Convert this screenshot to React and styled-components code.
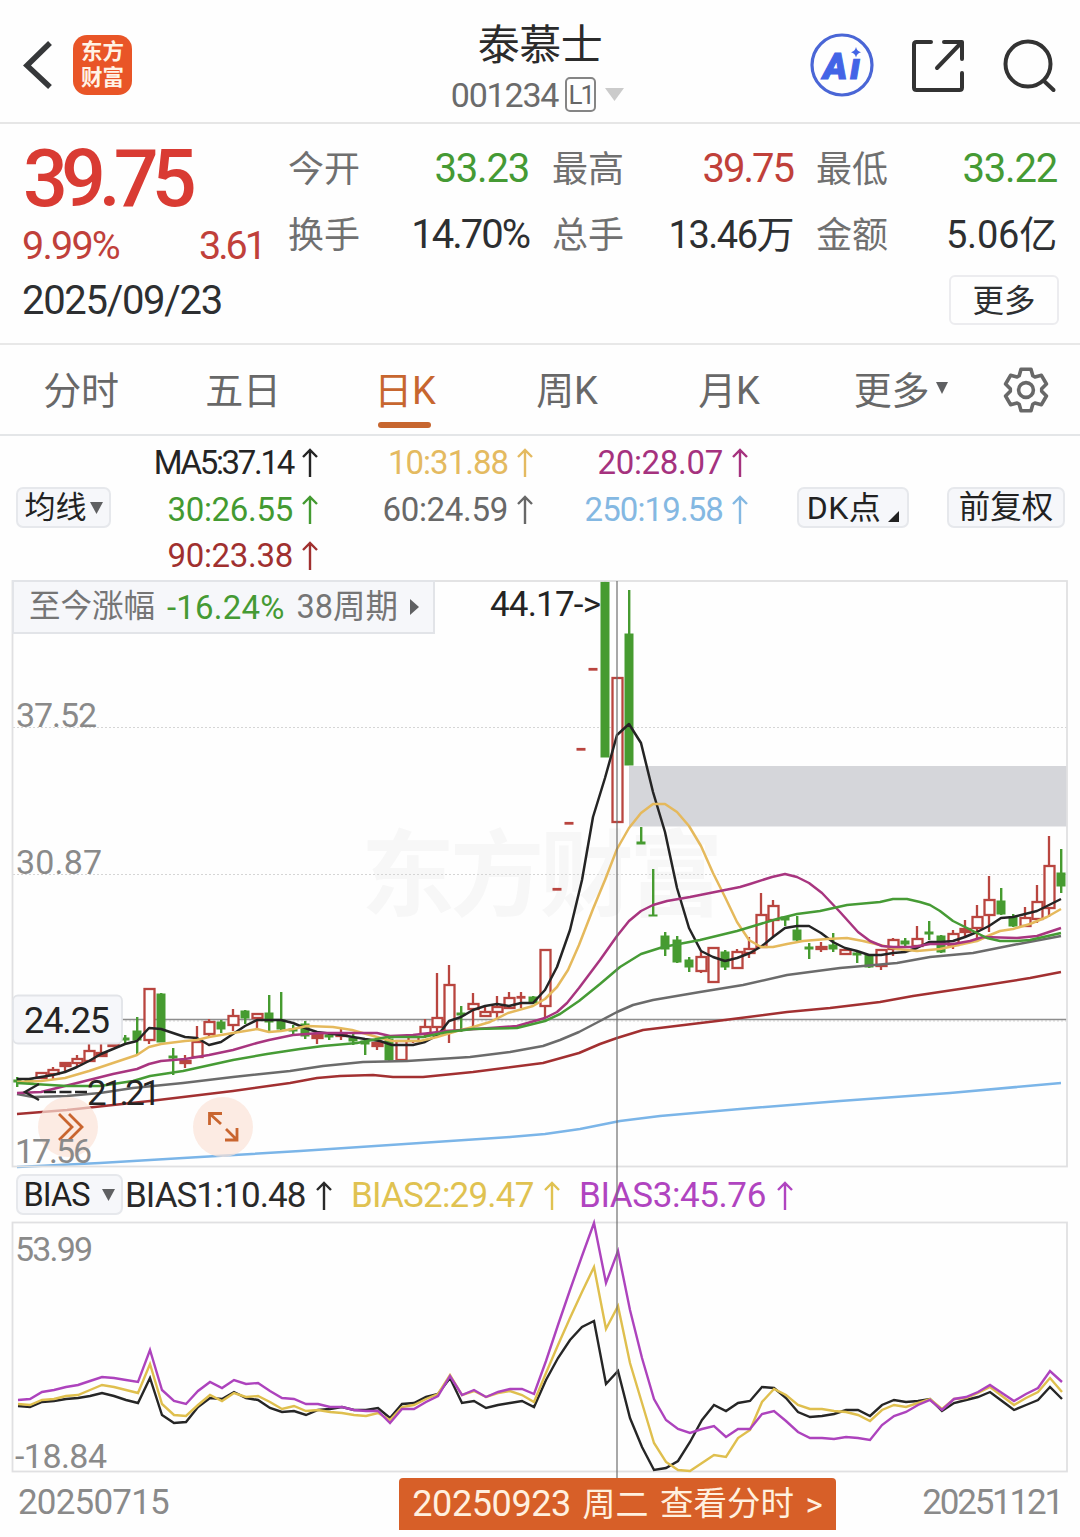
// App.jsx

import React from 'react';
import styled, { createGlobalStyle } from 'styled-components';

const GlobalStyle = createGlobalStyle`
  * {
    box-sizing: border-box;
  }

  body {
    margin: 0;
    background: #fefefe;
    font-family: Roboto, 'Noto Sans CJK SC', sans-serif;
    color: #2b2b2b;
  }

  svg {
    display: block;
    flex: none;
    overflow: visible;
  }
`;

const Page = styled.div`
  width: 1080px;
  height: 1537px;
  overflow: hidden;
  background: #fefefe;
`;

const Txt = styled.span`
  font-size: ${(p) => p.$size || 36}px;
  letter-spacing: ${(p) => p.$track || 0}px;
  color: ${(p) => p.$color || 'inherit'};
  line-height: 1;
  white-space: nowrap;
`;

const Header = styled.header`
  height: 124px;
  border-bottom: 2px solid #e6e6e6;
  display: grid;
  grid-template-columns: 400px 280px 400px;
  align-items: center;
  padding-top: 8px;
`;

const HeaderLeft = styled.div`
  display: flex;
  align-items: center;
  gap: 19px;
  padding-left: 22px;
`;

const Logo = styled.div`
  width: 59px;
  height: 60px;
  border-radius: 14px;
  background: #e95527;
  color: #fff3e6;
  font-size: 21.5px;
  font-weight: 700;
  line-height: 26px;
  padding-top: 4px;
  text-align: center;
`;

const HeaderTitle = styled.div`
  display: flex;
  flex-direction: column;
  align-items: center;
  gap: 10px;
  padding-top: 7px;
`;

const CodeRow = styled.div`
  display: flex;
  align-items: center;
  gap: 7px;
  height: 35px;
  margin-left: -5px;
`;

const Level = styled.span`
  width: 31px;
  height: 35px;
  margin-right: 2px;
  border: 2px solid #858585;
  border-radius: 5px;
  color: #666;
  font-size: 26px;
  line-height: 32px;
  letter-spacing: -2px;
  text-align: center;
`;

const HeaderRight = styled.div`
  display: flex;
  align-items: center;
  gap: 37px;
  padding-left: 130px;
`;

const Quote = styled.section`
  height: 221px;
  border-bottom: 2px solid #e8e8e8;
  display: grid;
  grid-template-columns: 240px 768px;
  column-gap: 25px;
  padding-left: 24px;
`;

const PriceBlock = styled.div`
  display: flex;
  flex-direction: column;
`;

const Price = styled.div`
  height: 60px;
  margin-top: 24px;
  margin-left: -1px;
  font-size: 79px;
  font-weight: 500;
  letter-spacing: -7px;
  line-height: 62px;
  color: #d93b33;
`;

const ChangeRow = styled.div`
  display: flex;
  justify-content: space-between;
  margin-top: 18px;
  margin-left: -2px;
  line-height: 42px;
  color: #c0403a;
`;

const DateRow = styled.div`
  margin-top: 15px;
  margin-left: -2px;
  line-height: 42px;
  color: #2d2f31;
`;

const Stats = styled.div`
  display: grid;
  grid-template-columns: repeat(3, 240px);
  grid-template-rows: 66px 66px 50px;
  column-gap: 24px;
  padding-top: 12px;
`;

const Stat = styled.div`
  display: flex;
  align-items: center;
  justify-content: space-between;
`;

const StatLabel = styled(Txt)`
  margin-left: -1px;
  padding-top: 2px;
  color: #707070;
`;

const MoreButton = styled.button`
  grid-column: 3;
  justify-self: end;
  width: 110px;
  height: 50px;
  margin-top: 7px;
  margin-right: -2px;
  border: 2px solid #ececef;
  border-radius: 6px;
  background: #fefefe;
  color: #2d2f31;
  font: 31.5px/40px 'Noto Sans CJK SC', sans-serif;
  padding: 0 0 5px;
`;

const Tabs = styled.nav`
  height: 91px;
  border-bottom: 2px solid #e4e6e8;
  display: grid;
  grid-template-columns: repeat(5, 162px) 182px 68px;
`;

const Tab = styled.div`
  display: flex;
  align-items: center;
  justify-content: center;
  gap: 7px;
  position: relative;
  padding-bottom: ${(p) => (p.$icon ? 0 : 4)}px;
  font-size: 38px;
  letter-spacing: -0.2px;
  color: ${(p) => (p.$active ? '#c7662f' : '#686868')};

  &::after {
    content: '';
    display: ${(p) => (p.$active ? 'block' : 'none')};
    position: absolute;
    left: 54px;
    bottom: 6px;
    width: 53px;
    height: 6px;
    border-radius: 3px;
    background: #c7662f;
  }
`;

const Legend = styled.section`
  height: 144px;
  display: flex;
  padding: 3px 16px 0;
`;

const Chip = styled.div`
  width: ${(p) => p.$w}px;
  height: 41px;
  flex: none;
  display: flex;
  align-items: center;
  justify-content: center;
  gap: ${(p) => p.$gap || 0}px;
  border: 2px solid #e6e8ec;
  border-radius: 7px;
  background: #f6f7fa;
  color: #222;
  font-size: ${(p) => p.$size || 31}px;
  line-height: 36px;
  letter-spacing: ${(p) => p.$track || 0}px;
`;

const LegendGrid = styled.div`
  display: grid;
  grid-template-columns: 207px 215px 215px;
  grid-template-rows: 47px 47px 45px;
  margin-right: 49px;
`;

const LegendItem = styled.div`
  display: flex;
  align-items: center;
  justify-content: flex-end;
  gap: 9px;
  color: ${(p) => p.$color};
`;

const ChipRow = styled.div`
  display: flex;
  gap: ${(p) => p.$gap || 0}px;
  padding-top: 48px;
`;

const Charts = styled.main`
  position: relative;
`;

const Crosshair = styled.div`
  position: absolute;
  left: 616px;
  top: 1px;
  width: 2px;
  height: 897px;
  background: rgba(110, 110, 110, 0.6);
`;

const GainTab = styled.div`
  position: absolute;
  left: 12px;
  top: 0;
  width: 423px;
  height: 54px;
  border: 2px solid #e2e4e8;
  background: #f6f7fa;
  display: flex;
  align-items: center;
  padding-left: 15px;
  gap: 12px;
  color: #757575;
`;

const BiasRow = styled.div`
  height: 53px;
  display: flex;
  align-items: center;
  padding-left: 16px;
`;

const BiasItem = styled(LegendItem)`
  justify-content: space-between;
  width: ${(p) => p.$w}px;
  margin-left: ${(p) => p.$ml}px;
  padding-top: 2px;
`;

const Footer = styled.footer`
  display: grid;
  grid-template-columns: 381px 437px 1fr;
  align-items: start;
  padding: 5px 18px 0;
`;

const FootDate = styled(Txt)`
  line-height: 50px;
  justify-self: ${(p) => (p.$end ? 'end' : 'start')};
`;

const DayButton = styled.div`
  height: 52px;
  border-radius: 4px 4px 0 0;
  background: #d75f28;
  color: #fff0df;
  display: flex;
  align-items: center;
  justify-content: center;
  gap: 11.5px;
`;

const MA_LEGEND = [
  { label: 'MA5:37.14', color: '#242424', track: -2.3 },
  { label: '10:31.88', color: '#e4ba60', track: -1 },
  { label: '20:28.07', color: '#a5327e', track: -0.3 },
  { label: '30:26.55', color: '#439a31', track: -0.3 },
  { label: '60:24.59', color: '#686868', track: -0.3 },
  { label: '250:19.58', color: '#84b8e2', track: -0.9 },
  { label: '90:23.38', color: '#a0302f', track: -0.3 },
];

const BIAS_LEGEND = [
  { label: 'BIAS1:10.48', color: '#2a2a2a', w: 207, ml: 2, track: -1 },
  { label: 'BIAS2:29.47', color: '#e0c251', w: 209, ml: 19, track: -0.8 },
  { label: 'BIAS3:45.76', color: '#b044c0', w: 214, ml: 19, track: -0.4 },
];

const STATS = [
  { label: '今开', value: '33.23', color: '#459a34', track: -1.2 },
  { label: '最高', value: '39.75', color: '#c0403a', track: -2 },
  { label: '最低', value: '33.22', color: '#459a34', track: -1.2 },
  { label: '换手', value: '14.70%', color: '#2d2f31', track: -2 },
  { label: '总手', value: '13.46万', color: '#2d2f31', track: -1.5 },
  { label: '金额', value: '5.06亿', color: '#2d2f31', track: -0.2 },
];

// [up, high, bodyTop, bodyBottom, low], 1 = red, 0 = green
const CANDLES = [
  [0, 1077, 1080, 1082, 1087], [0, 1078, 1080, 1082, 1083], [1, 1072, 1073, 1078, 1078],
  [1, 1067, 1070, 1074, 1079], [1, 1062, 1063, 1066, 1071], [1, 1055, 1059, 1063, 1066],
  [1, 1043, 1051, 1061, 1061], [1, 1043, 1053, 1056, 1056], [1, 1040, 1044, 1046, 1047],
  [0, 1035, 1038, 1040, 1043], [0, 1017, 1031, 1040, 1054], [1, 988, 989, 1040, 1044],
  [0, 993, 994, 1042, 1042], [0, 1048, 1056, 1058, 1075], [1, 1055, 1061, 1063, 1068],
  [1, 1026, 1042, 1057, 1057], [1, 1019, 1022, 1034, 1037], [0, 1020, 1022, 1029, 1033],
  [1, 1009, 1016, 1025, 1031], [0, 1010, 1011, 1018, 1024], [1, 1013, 1014, 1018, 1028],
  [0, 995, 1013, 1022, 1031], [0, 992, 1020, 1029, 1030], [0, 1025, 1029, 1031, 1034],
  [0, 1021, 1024, 1036, 1039], [1, 1034, 1035, 1038, 1044], [0, 1032, 1035, 1037, 1040],
  [1, 1029, 1034, 1036, 1040], [0, 1033, 1038, 1041, 1045], [0, 1040, 1041, 1044, 1055],
  [1, 1042, 1043, 1046, 1050], [0, 1038, 1039, 1060, 1061], [1, 1040, 1041, 1060, 1060],
  [1, 1035, 1037, 1041, 1043], [1, 1019, 1027, 1034, 1038], [1, 973, 1018, 1027, 1034],
  [1, 965, 985, 1031, 1043], [0, 1006, 1013, 1015, 1032], [1, 993, 1004, 1009, 1026],
  [1, 1007, 1012, 1016, 1016], [1, 996, 1007, 1012, 1019], [1, 992, 998, 1008, 1008],
  [1, 992, 997, 998, 1008], [0, 996, 997, 1003, 1004], [1, 949, 950, 1006, 1018],
  [1, 889, 889, 890, 890], [1, 823, 823, 824, 824], [1, 749, 749, 750, 750],
  [1, 669, 669, 670, 670], [0, 581, 582, 757, 757], [1, 677, 678, 822, 822],
  [0, 590, 634, 765, 765], [0, 827, 842, 844, 844], [0, 869, 915, 916, 916],
  [0, 932, 936, 949, 956], [0, 936, 940, 962, 963], [0, 957, 960, 967, 972],
  [1, 952, 957, 971, 973], [1, 947, 948, 982, 983], [0, 950, 952, 967, 970],
  [1, 949, 952, 968, 968], [1, 937, 949, 953, 958], [1, 893, 915, 947, 947],
  [1, 900, 906, 920, 937], [0, 916, 917, 920, 926], [0, 916, 930, 940, 941],
  [0, 943, 947, 949, 959], [1, 942, 947, 949, 952], [0, 933, 945, 949, 952],
  [1, 949, 950, 954, 955], [0, 951, 953, 955, 963], [0, 954, 955, 967, 968],
  [1, 949, 950, 966, 970], [1, 938, 940, 949, 956], [0, 938, 941, 944, 948],
  [1, 926, 939, 946, 946], [0, 921, 932, 934, 940], [0, 935, 936, 952, 953],
  [1, 930, 934, 945, 949], [1, 920, 929, 932, 937], [1, 905, 917, 928, 938],
  [1, 876, 900, 915, 932], [0, 888, 901, 914, 915], [0, 914, 917, 926, 927],
  [1, 907, 918, 926, 927], [1, 885, 902, 919, 923], [1, 836, 866, 908, 917],
  [0, 849, 873, 886, 893],
];

const MA_LINES = [
  {
    color: '#a23031',
    d: '17,1114 67,1110 150,1101 233,1091 290,1083 317,1078 340,1076 373,1075 393,1077 423,1077 473,1072 543,1063 579,1053 600,1044 617,1038 643,1030 717,1021 787,1012 830,1008 880,1002 913,996 973,987 1030,978 1061,972',
  },
  {
    color: '#7bb5e8',
    d: '17,1167 100,1163 200,1157 300,1151 420,1143 510,1137 545,1134 580,1129 620,1121 660,1116 740,1109 840,1101 950,1093 1061,1083',
  },
  {
    color: '#6b6b6b',
    d: '17,1094 33,1097 67,1096 100,1093 133,1088 183,1083 233,1077 290,1071 323,1066 363,1062 407,1061 470,1057 510,1052 543,1046 560,1040 579,1032 600,1021 617,1012 633,1005 653,1000 700,992 743,985 787,975 840,968 863,966 897,963 930,957 973,953 1013,945 1061,936',
  },
  {
    color: '#242424',
    d: '17,1079 29,1079 41,1077 53,1075 65,1072 77,1067 89,1061 101,1054 113,1049 125,1044 137,1041 149,1028 161,1029 173,1033 185,1037 197,1038 209,1045 221,1042 233,1034 245,1026 257,1020 269,1020 281,1020 293,1023 305,1028 317,1032 341,1035 365,1039 380,1041 392,1045 413,1045 425,1042 438,1035 449,1021 461,1017 473,1010 485,1006 497,1004 509,1006 521,1003 533,1003 545,990 557,967 570,930 582,880 593,817 605,778 617,735 629,724 641,743 653,792 665,832 677,888 689,928 701,951 713,957 725,961 737,958 750,953 762,946 773,937 785,928 797,926 809,926 821,933 833,942 845,948 857,951 869,955 881,955 893,953 905,952 917,948 929,942 941,942 953,941 965,937 977,932 989,926 1001,918 1013,917 1025,914 1037,911 1049,905 1061,899',
  },
  {
    color: '#e5b95c',
    d: '17,1082 41,1081 65,1078 89,1071 113,1063 137,1055 149,1047 161,1044 185,1041 197,1040 209,1037 233,1033 257,1029 269,1032 281,1031 293,1029 307,1026 333,1027 352,1030 377,1037 392,1041 420,1041 437,1037 457,1031 473,1027 490,1022 508,1013 533,1006 545,999 557,987 568,970 579,945 593,909 605,880 617,849 629,828 641,813 653,804 665,804 677,812 689,826 701,846 713,873 725,897 737,922 749,940 761,947 773,947 787,944 803,941 827,939 847,938 863,941 880,945 897,949 917,951 940,949 963,944 977,941 990,935 1000,931 1013,929 1030,924 1047,917 1061,909',
  },
  {
    color: '#a8357f',
    d: '17,1093 41,1092 65,1086 89,1080 113,1074 137,1069 149,1064 161,1061 185,1059 209,1055 233,1050 257,1043 269,1040 293,1035 320,1033 377,1033 390,1036 413,1035 447,1031 490,1028 517,1026 545,1018 557,1012 567,1003 579,988 600,960 617,936 629,921 641,911 653,905 667,901 690,897 710,893 740,887 750,884 772,877 785,874 797,877 809,883 822,893 840,912 858,932 870,941 882,946 893,947 913,947 930,944 953,944 970,941 983,937 1017,938 1037,936 1061,928',
  },
  {
    color: '#469b35',
    d: '17,1083 67,1086 100,1086 133,1081 150,1076 183,1071 233,1060 267,1054 300,1049 323,1046 357,1043 387,1037 423,1037 447,1032 473,1029 517,1028 545,1021 560,1014 579,1001 600,984 620,967 641,954 663,947 700,940 737,931 777,919 797,914 820,911 847,905 880,902 893,899 907,899 920,902 930,905 940,911 953,921 973,931 987,938 1000,941 1017,941 1030,940 1061,933',
  },
];

const BIAS_LINES = [
  {
    color: '#262626',
    ys: [1406, 1407, 1402, 1401, 1399, 1398, 1396, 1393, 1396, 1400, 1403, 1378, 1415, 1423, 1422, 1407, 1398, 1399, 1392, 1398, 1400, 1408, 1412, 1411, 1415, 1410, 1409, 1407, 1410, 1410, 1408, 1418, 1404, 1403, 1397, 1394, 1378, 1403, 1401, 1408, 1405, 1403, 1401, 1407, 1380, 1358, 1340, 1327, 1321, 1384, 1371, 1418, 1447, 1470, 1468, 1461, 1442, 1420, 1405, 1411, 1403, 1401, 1387, 1388, 1398, 1412, 1417, 1416, 1414, 1410, 1410, 1416, 1405, 1400, 1402, 1401, 1399, 1411, 1403, 1400, 1397, 1392, 1401, 1410, 1405, 1400, 1387, 1399],
  },
  {
    color: '#dfbf4e',
    ys: [1404, 1405, 1400, 1399, 1396, 1395, 1390, 1385, 1387, 1390, 1393, 1364, 1404, 1415, 1416, 1405, 1395, 1401, 1393, 1397, 1396, 1402, 1409, 1406, 1411, 1410, 1412, 1413, 1415, 1416, 1413, 1420, 1407, 1405, 1399, 1394, 1375, 1395, 1391, 1397, 1393, 1391, 1395, 1402, 1373, 1345, 1318, 1292, 1267, 1329, 1306, 1363, 1403, 1443, 1462, 1470, 1471, 1463, 1455, 1457, 1438, 1430, 1402, 1389, 1395, 1405, 1409, 1409, 1411, 1412, 1415, 1421, 1410, 1405, 1407, 1403, 1399, 1409, 1399, 1398, 1393, 1387, 1396, 1405, 1398, 1392, 1378, 1392],
  },
  {
    color: '#ad43bd',
    ys: [1400, 1399, 1392, 1390, 1387, 1385, 1381, 1377, 1378, 1380, 1382, 1350, 1390, 1401, 1404, 1391, 1382, 1388, 1380, 1384, 1383, 1391, 1398, 1399, 1404, 1404, 1407, 1407, 1410, 1411, 1411, 1423, 1409, 1409, 1402, 1396, 1376, 1395, 1390, 1397, 1392, 1389, 1389, 1394, 1361, 1325, 1290, 1256, 1223, 1283, 1251, 1310, 1358, 1399, 1420, 1429, 1433, 1429, 1426, 1437, 1429, 1429, 1414, 1411, 1421, 1432, 1438, 1438, 1439, 1437, 1438, 1440, 1425, 1416, 1412, 1405, 1400, 1410, 1399, 1397, 1392, 1385, 1393, 1401, 1394, 1388, 1371, 1382],
  },
];

const barX = (i) => 17 + i * 12;

function UpArrow({ width = 16, height = 30 }) {
  return (
    <svg width={width} height={height} viewBox="0 0 16 30" fill="none" stroke="currentColor" strokeWidth="2.4">
      <path d="M8 29V2M1 9L8 2l7 7" />
    </svg>
  );
}

function Caret({ width = 14, height = 12, color = '#5f6062' }) {
  return (
    <svg width={width} height={height} viewBox="0 0 14 12" preserveAspectRatio="none">
      <path d="M0 0h14L7 12z" fill={color} />
    </svg>
  );
}

function GearIcon() {
  const tooth = [[-6.8, -14.2], [-5, -20.7], [5, -20.7], [6.8, -14.2]];
  const points = [];
  for (let k = 0; k < 6; k += 1) {
    const a = (k * Math.PI) / 3;
    tooth.forEach(([x, y]) => {
      points.push(`${x * Math.cos(a) - y * Math.sin(a)},${x * Math.sin(a) + y * Math.cos(a)}`);
    });
  }
  return (
    <svg width="48" height="48" viewBox="-24 -24 48 48" fill="none" stroke="#686868" strokeWidth="3.6" strokeLinejoin="round">
      <polygon points={points.join(' ')} />
      <circle r="7.4" />
    </svg>
  );
}

function AiIcon() {
  return (
    <svg width="64" height="64" viewBox="0 0 64 64">
      <circle cx="32" cy="32" r="30" fill="none" stroke="#4a66d6" strokeWidth="3.2" />
      <text x="13" y="45.500" fontFamily="Roboto" fontSize="37" fontWeight="900" fontStyle="italic" fill="#4364e6" stroke="#4364e6" strokeWidth="1" textLength="37">Ai</text>
      <path d="M40 14h13v11.500H40z" fill="#fefefe" />
      <path d="M46 14q1 4.200 5 5.200q-4 1-5 5.200q-1-4.200-5-5.200q4-1 5-5.200z" fill="#4364e6" />
    </svg>
  );
}

function ShareIcon() {
  return (
    <svg width="54" height="54" viewBox="0 -1 54 54" fill="none" stroke="#333" strokeWidth="4" strokeLinecap="round" strokeLinejoin="round">
      <path d="M20 3H5.500Q3 3 3 5.500V48.500Q3 51 5.500 51H48.500Q51 51 51 48.500V34" />
      <path d="M33 3H51V20M50 4L26 29" />
    </svg>
  );
}

function SearchIcon() {
  return (
    <svg width="56" height="56" viewBox="0 -1 56 56" fill="none" stroke="#333" strokeWidth="4" strokeLinecap="round">
      <circle cx="26" cy="26" r="22.500" />
      <path d="M42 43L51.500 52" />
    </svg>
  );
}

function Candle({ index, data }) {
  const [up, high, top, bottom, low] = data;
  const x = barX(index);
  if (!up) {
    return (
      <g fill="#469b30">
        <rect x={x - 1} y={high} width="2.4" height={low - high} />
        <rect x={x - 4.5} y={top - 0.5} width="9" height={bottom - top + 1} />
      </g>
    );
  }
  return (
    <g stroke="#b9453f" strokeWidth="2.3" fill={bottom - top > 3 ? '#fefefe' : '#b9453f'}>
      {low - high > 1 && <path d={`M${x} ${high}V${top}M${x} ${bottom}V${low}`} />}
      {bottom - top > 1 ? (
        <rect x={x - 4.5} y={top} width="10" height={bottom - top} />
      ) : (
        <path d={`M${x - 4.5} ${top + 0.3}H${x + 4.5}`} strokeWidth="2.8" />
      )}
    </g>
  );
}

function KChart() {
  return (
    <svg width="1080" height="588" viewBox="0 580 1080 588" fontFamily="Roboto">
      <text x="361" y="909" fontFamily="Noto Sans CJK SC" fontWeight="700" fontSize="94" textLength="362" fill="#f7f7f7">东方财富</text>
      <rect x="629" y="766" width="438" height="60.500" fill="#d5d6da" />
      <path d="M13 727.500H1067M13 874.500H1067M13 1021H1067" stroke="#d5d5d5" strokeDasharray="2 2" />
      <path d="M122 1019.500H1067" stroke="#8d8d8d" strokeWidth="1.6" />
      {CANDLES.map((c, i) => (
        <Candle key={barX(i)} index={i} data={c} />
      ))}
      {MA_LINES.map((l) => (
        <polyline key={l.color} points={l.d} fill="none" stroke={l.color} strokeWidth="2.5" strokeLinejoin="round" />
      ))}
      <rect x="12.500" y="581" width="1054.500" height="585.500" fill="none" stroke="#e0e0e2" strokeWidth="1.800" />

      <g fill="#fbe3d7" fillOpacity="0.7">
        <circle cx="68" cy="1127" r="30" />
        <circle cx="223" cy="1127" r="30" />
      </g>
      <g fill="none" stroke="#c9652f" strokeWidth="2.8">
        <path d="M59 1114L72 1127L59 1140M69 1114L82 1127L69 1140" />
        <path d="M222 1113.500H209.500V1125M210 1114L221 1124M225 1140H237V1128M236 1139L226 1129" />
      </g>

      <g fill="#8a8a8a" fontSize="34">
        <text x="16" y="727" textLength="81">37.52</text>
        <text x="16" y="874" textLength="86">30.87</text>
        <text x="15" y="1163" textLength="77">17.56</text>
      </g>
      <g fill="none" stroke="#242424" strokeWidth="2.4">
        <path d="M39 1084L25 1092L39 1100" />
        <path d="M44 1092H87" strokeDasharray="12 3.500" />
      </g>
      <text x="87" y="1105" fontSize="35" fill="#242424" textLength="74">21.21</text>
      <text x="490" y="616" fontSize="35" fill="#242424" textLength="111">44.17-&gt;</text>
      <rect x="13" y="995.500" width="109" height="48" rx="5" fill="#f6f7fa" stroke="#e2e4e8" strokeWidth="1.800" />
      <text x="24" y="1033" fontSize="36" fill="#242424" textLength="86">24.25</text>
    </svg>
  );
}

function BiasChart() {
  return (
    <svg width="1080" height="252" viewBox="0 1221 1080 252" fontFamily="Roboto">
      <rect x="12.500" y="1222.500" width="1054.500" height="249" fill="none" stroke="#e0e0e2" strokeWidth="1.800" />
      <g fill="#8a8a8a" fontSize="34">
        <text x="15" y="1261" textLength="78">53.99</text>
        <text x="15" y="1468" textLength="92">-18.84</text>
      </g>
      {BIAS_LINES.map((l) => (
        <polyline
          key={l.color}
          points={l.ys.map((y, i) => `${barX(i) + 1},${y}`).join(' ')}
          fill="none"
          stroke={l.color}
          strokeWidth="2.4"
        />
      ))}
    </svg>
  );
}

function App() {
  return (
    <Page>
      <GlobalStyle />
      <Header>
        <HeaderLeft>
          <svg width="32" height="50" viewBox="0 0 32 50" fill="none" stroke="#36383a" strokeWidth="5.5">
            <path d="M28 3L5 25.500L28 47" />
          </svg>
          <Logo>
            东方
            <br />
            财富
          </Logo>
        </HeaderLeft>
        <HeaderTitle>
          <Txt $size={42} $track={-0.5}>泰慕士</Txt>
          <CodeRow>
            <Txt $size={34} $track={-1.2} $color="#6b6b6b">001234</Txt>
            <Level>L1</Level>
            <Caret width={19} height={13} color="#cbcbcb" />
          </CodeRow>
        </HeaderTitle>
        <HeaderRight>
          <AiIcon />
          <ShareIcon />
          <SearchIcon />
        </HeaderRight>
      </Header>

      <Quote>
        <PriceBlock>
          <Price>39.75</Price>
          <ChangeRow>
            <Txt $size={39.5} $track={-1.8}>9.99%</Txt>
            <Txt $size={39.5} $track={-3}>3.61</Txt>
          </ChangeRow>
          <DateRow>
            <Txt $size={40} $track={-1.3}>2025/09/23</Txt>
          </DateRow>
        </PriceBlock>
        <Stats>
          {STATS.map((s) => (
            <Stat key={s.label}>
              <StatLabel>{s.label}</StatLabel>
              <Txt $size={s.value.match(/[万亿]/) ? 38 : 40} $track={s.track} $color={s.color}>{s.value}</Txt>
            </Stat>
          ))}
          <MoreButton>更多</MoreButton>
        </Stats>
      </Quote>

      <Tabs>
        <Tab>分时</Tab>
        <Tab>五日</Tab>
        <Tab $active>日K</Tab>
        <Tab>周K</Tab>
        <Tab>月K</Tab>
        <Tab>
          更多
          <Caret width={12} height={12} />
        </Tab>
        <Tab $icon>
          <GearIcon />
        </Tab>
      </Tabs>

      <Legend>
        <ChipRow>
          <Chip $w={95} $gap={3}>
            均线
            <Caret width={13} />
          </Chip>
        </ChipRow>
        <LegendGrid>
          {MA_LEGEND.map((m) => (
            <LegendItem key={m.label} $color={m.color}>
              <Txt $size={33} $track={m.track}>{m.label}</Txt>
              <UpArrow />
            </LegendItem>
          ))}
        </LegendGrid>
        <ChipRow $gap={38}>
          <Chip $w={112} $gap={7} $size={32} $track={0.4}>
            DK点
            <svg width="11" height="27" viewBox="0 0 11 27">
              <path d="M11 17V28H0z" fill="#222" />
            </svg>
          </Chip>
          <Chip $w={118} $size={31.5}>前复权</Chip>
        </ChipRow>
      </Legend>

      <Charts>
        <KChart />
        <GainTab>
          <Txt $size={31.5}>至今涨幅</Txt>
          <Txt $size={33} $track={0.2} $color="#459a34">-16.24%</Txt>
          <Txt $size={32.5}>38周期</Txt>
          <svg width="9" height="16" viewBox="0 0 9 16">
            <path d="M0 0L9 8L0 16z" fill="#5f6062" />
          </svg>
        </GainTab>
        <BiasRow>
          <Chip $w={107} $gap={13} $size={32.5} $track={-1}>
            BIAS
            <Caret width={13} />
          </Chip>
          {BIAS_LEGEND.map((b) => (
            <BiasItem key={b.label} $color={b.color} $w={b.w} $ml={b.ml}>
              <Txt $size={35} $track={b.track}>{b.label}</Txt>
              <UpArrow />
            </BiasItem>
          ))}
        </BiasRow>
        <BiasChart />
        <Crosshair />
      </Charts>

      <Footer>
        <FootDate $size={35} $track={-0.8} $color="#8a8a8a">20250715</FootDate>
        <DayButton>
          <Txt $size={36} $track={-0.4}>20250923</Txt>
          <Txt $size={33}>周二</Txt>
          <Txt $size={33.5}>查看分时</Txt>
          <Txt $size={33}>&gt;</Txt>
        </DayButton>
        <FootDate $end $size={35} $track={-2.2} $color="#8a8a8a">20251121</FootDate>
      </Footer>
    </Page>
  );
}

export default App;
